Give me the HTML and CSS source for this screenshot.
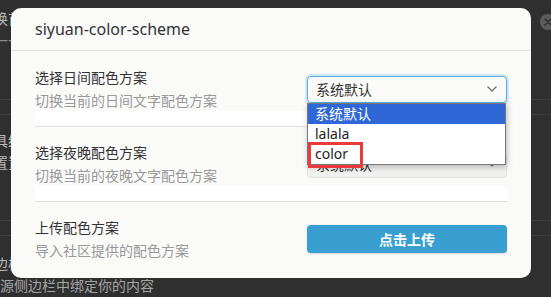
FILE: index.html
```html
<!DOCTYPE html>
<html lang="zh">
<head>
  <meta charset="UTF-8" />
  <title>siyuan-color-scheme</title>
  <link rel="stylesheet" href="styles.css">
</head>
<body>
  <!-- settings panel behind the dialog -->
  <div class="backdrop">
    <div class="bg-block bg-top">
      <div class="bg-text">换首页</div>
      <div class="bg-text bg-dash">一一</div>
    </div>
    <div class="bg-gap"></div>
    <div class="bg-block bg-mid">
      <div class="bg-text">具绿色</div>
      <div class="bg-text">置置</div>
    </div>
    <div class="bg-gap"></div>
    <div class="bg-block bg-bottom">
      <div class="bg-text">边栏</div>
      <div class="bg-text bg-full">源侧边栏中绑定你的内容</div>
    </div>
  </div>

  <div class="close-btn">
    <svg width="12" height="12" viewBox="0 0 12 12"><path d="M3 3 L9 9 M9 3 L3 9" stroke="#2b2b2b" stroke-width="1.6" stroke-linecap="round"/></svg>
  </div>

  <div class="dialog">
    <div class="dialog-header">siyuan-color-scheme</div>
    <div class="dialog-body">
      <div class="setting">
        <div class="setting-row">
          <div class="setting-text">
            <div class="setting-title">选择日间配色方案</div>
            <div class="setting-desc">切换当前的日间文字配色方案</div>
          </div>
          <div class="select select-focus">
            <span>系统默认</span>
            <svg width="12" height="8" viewBox="0 0 12 8"><path d="M1.5 1.5 L6 6 L10.5 1.5" fill="none" stroke="#777" stroke-width="1.3"/></svg>
          </div>
        </div>
        <div class="setting-strip"></div>
      </div>

      <div class="setting">
        <div class="setting-row">
          <div class="setting-text">
            <div class="setting-title">选择夜晚配色方案</div>
            <div class="setting-desc">切换当前的夜晚文字配色方案</div>
          </div>
          <div class="select select-idle">
            <span>系统默认</span>
            <svg width="12" height="8" viewBox="0 0 12 8"><path d="M1.5 1.5 L6 6 L10.5 1.5" fill="none" stroke="#888" stroke-width="1.3"/></svg>
          </div>
        </div>
        <div class="setting-strip"></div>
      </div>

      <div class="setting setting-last">
        <div class="setting-row">
          <div class="setting-text">
            <div class="setting-title">上传配色方案</div>
            <div class="setting-desc">导入社区提供的配色方案</div>
          </div>
          <button class="upload-btn">点击上传</button>
        </div>
      </div>
    </div>

    <!-- open dropdown list -->
    <div class="dropdown">
      <div class="option option-active">系统默认</div>
      <div class="option">lalala</div>
      <div class="option">color</div>
    </div>
    <div class="mark-box"></div>
  </div>
</body>
</html>
```

FILE: styles.css
```css
body {
  margin: 0;
  width: 551px;
  height: 297px;
  overflow: hidden;
  background-color: #2f2f2f;
  font-family: "Noto Sans", "Noto Sans CJK SC", sans-serif;
  position: relative;
}

.backdrop {
  display: flex;
  flex-direction: column;
}

.bg-block {
  padding-left: 0;
}

.bg-top {
  height: 100px;
  border-bottom: 1px solid #3d3d3d;
  padding-top: 8px;
  box-sizing: border-box;
}

.bg-gap {
  height: 14px;
  border-bottom: 1px solid #3d3d3d;
}

.bg-mid {
  height: 106px;
  border-bottom: 1px solid #3d3d3d;
  padding-top: 15px;
  box-sizing: border-box;
}

.bg-bottom {
  padding-top: 17px;
}

.bg-text {
  font-size: 14px;
  line-height: 22px;
  color: #b8b8b8;
  margin-left: -6px;
  white-space: nowrap;
}

.bg-dash {
  color: #8a8a8a;
}

.bg-full {
  margin-left: 0;
  color: #a4a4a4;
}

.close-btn {
  position: absolute;
  left: 540px;
  top: 14px;
  width: 16px;
  height: 16px;
  border-radius: 50%;
  background-color: #5c5c5c;
  display: flex;
  align-items: center;
  justify-content: center;
}

.dialog {
  position: absolute;
  left: 11px;
  top: 8px;
  width: 520px;
  height: 270px;
  background-color: #fafaf9;
  border-radius: 10px;
  display: flex;
  flex-direction: column;
}

.dialog-header {
  height: 42px;
  display: flex;
  align-items: center;
  padding-left: 24px;
  font-size: 16px;
  color: #333;
  border-bottom: 1px solid #e3e3e3;
  box-sizing: content-box;
}

.dialog-body {
  padding: 0 24px;
}

.setting {
  border-bottom: 1px solid #e0e0e0;
  padding-top: 16px;
}

.setting + .setting {
  padding-top: 15px;
}

.setting-last {
  border-bottom: none;
}

.setting-row {
  display: flex;
  align-items: center;
}

.setting-text {
  flex: 1;
}

.setting-title {
  font-size: 14px;
  line-height: 22px;
  color: #333;
}

.setting-desc {
  font-size: 14px;
  line-height: 20px;
  margin-top: 2px;
  color: #999;
}

.setting-strip {
  height: 15px;
  background-color: #ffffff;
}

.select {
  width: 200px;
  height: 27px;
  box-sizing: border-box;
  border-radius: 4px;
  display: flex;
  align-items: center;
  justify-content: space-between;
  padding: 0 8px 0 8px;
  font-size: 14px;
  color: #333;
}

.select-focus {
  background-color: #fbfbfa;
  border: 1px solid #58aee0;
  box-shadow: 0 0 0 2px rgba(88, 174, 224, 0.25);
}

.select-idle {
  background-color: #f1f1f0;
  border: 1px solid #e2e2e2;
}

.upload-btn {
  width: 200px;
  height: 28px;
  border: none;
  border-radius: 4px;
  background-color: #389fd0;
  color: #fff;
  font-family: inherit;
  font-size: 14px;
  font-weight: bold;
  box-shadow: 0 1px 2px rgba(0, 0, 0, 0.15);
}

.dropdown {
  position: absolute;
  left: 296px;
  top: 95px;
  width: 199px;
  box-sizing: border-box;
  border: 1px solid #777;
  background-color: #fff;
  box-shadow: 1px 2px 6px rgba(0, 0, 0, 0.25);
}

.option {
  height: 20px;
  line-height: 20px;
  padding-left: 7px;
  font-size: 14px;
  color: #222;
}

.option-active {
  background-color: #2f68d6;
  color: #fff;
}

.mark-box {
  position: absolute;
  left: 297px;
  top: 134px;
  width: 55px;
  height: 26px;
  box-sizing: border-box;
  border: 3px solid #ea3a3a;
}
```
